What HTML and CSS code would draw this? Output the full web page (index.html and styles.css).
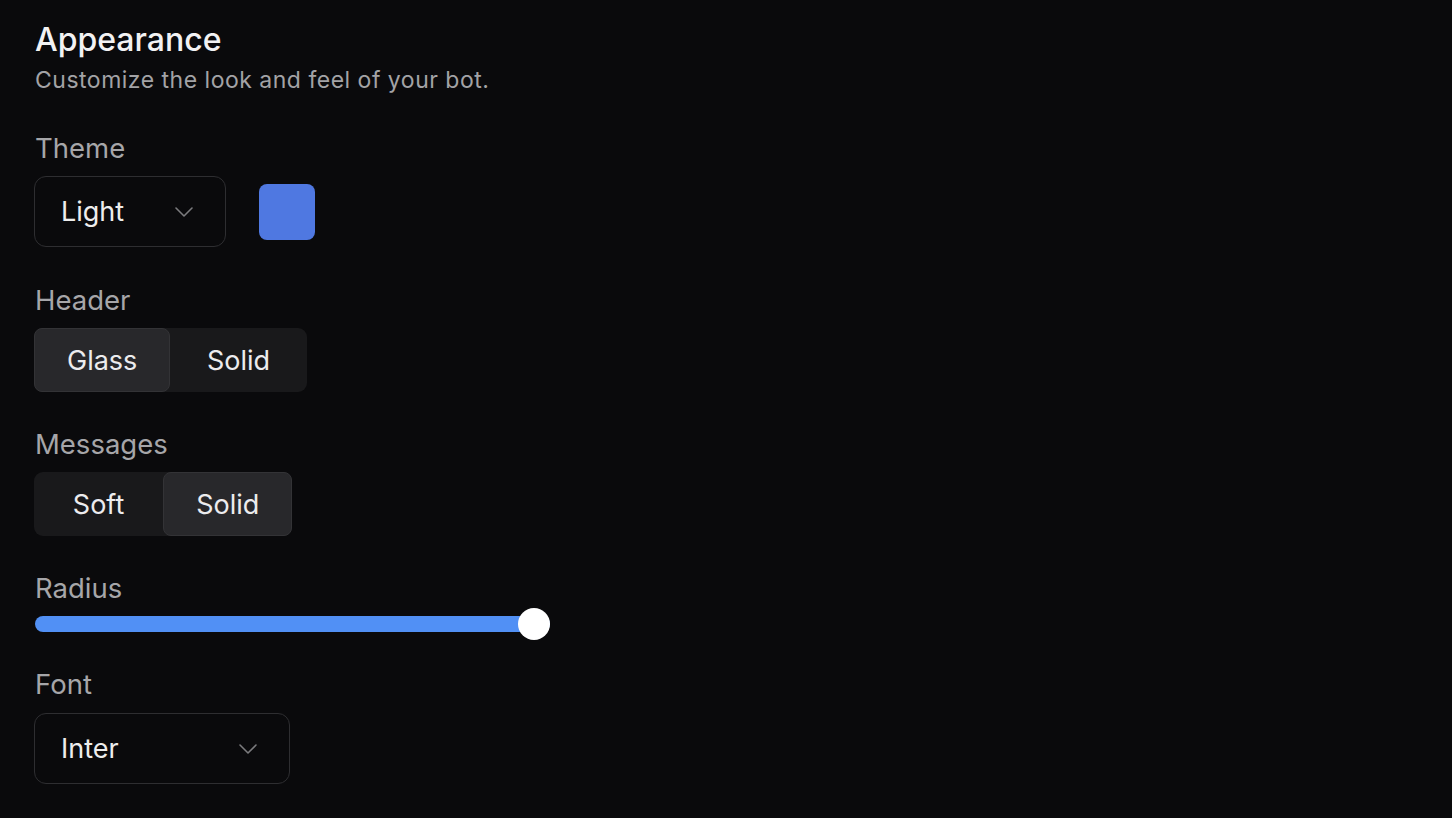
FILE: index.html
```html
<!DOCTYPE html>
<html lang="en">
<head>
<meta charset="utf-8">
<title>Appearance</title>
<link rel="stylesheet" href="styles.css">
</head>
<body>
<main class="panel">
  <header class="intro">
    <h1 class="title">Appearance</h1>
    <p class="subtitle">Customize the look and feel of your bot.</p>
  </header>

  <section class="field field-theme">
    <div class="label">Theme</div>
    <div class="row">
      <div class="select select-theme">
        <span>Light</span>
        <svg class="chev" width="18" height="10" viewBox="0 0 18 10"><path d="M1 1l8 8 8-8" fill="none" stroke="#7b7b7e" stroke-width="1.6" stroke-linecap="round" stroke-linejoin="round"/></svg>
      </div>
      <div class="swatch"></div>
    </div>
  </section>

  <section class="field">
    <div class="label">Header</div>
    <div class="seg">
      <div class="seg-btn active">Glass</div>
      <div class="seg-btn">Solid</div>
    </div>
  </section>

  <section class="field">
    <div class="label">Messages</div>
    <div class="seg">
      <div class="seg-btn">Soft</div>
      <div class="seg-btn active">Solid</div>
    </div>
  </section>

  <section class="field">
    <div class="label">Radius</div>
    <div class="slider">
      <div class="track"></div>
      <div class="thumb"></div>
    </div>
  </section>

  <section class="field field-font">
    <div class="label">Font</div>
    <div class="select select-font">
      <span>Inter</span>
      <svg class="chev" width="18" height="10" viewBox="0 0 18 10"><path d="M1 1l8 8 8-8" fill="none" stroke="#7b7b7e" stroke-width="1.6" stroke-linecap="round" stroke-linejoin="round"/></svg>
    </div>
  </section>
</main>
</body>
</html>
```
FILE: styles.css
```css
html, body {
  margin: 0;
  padding: 0;
  background: #0a0a0c;
}
body {
  font-family: Inter, "Noto Sans", sans-serif;
  color: #ededed;
}
.panel {
  padding: 20px 34px 0 34px;
  display: flex;
  flex-direction: column;
}
.intro {
  margin-bottom: 36px;
}
.title {
  margin: 0 0 0 1px;
  font-size: 32px;
  line-height: 40px;
  font-weight: 500;
  color: #f2f2f3;
}
.subtitle {
  margin: 4px 0 0 1px;
  font-size: 23px;
  line-height: 32px;
  color: #a3a3a6;
  letter-spacing: 0.5px;
}
.field {
  display: flex;
  flex-direction: column;
  align-items: flex-start;
  gap: 12px;
  margin-bottom: 36px;
}
.field-theme {
  margin-bottom: 37px;
}
.field-font {
  gap: 13px;
}
.label {
  margin-left: 1px;
  font-size: 27.5px;
  line-height: 32px;
  color: #a6a6a9;
}
.row {
  display: flex;
  align-items: center;
  gap: 33px;
}
.select {
  box-sizing: border-box;
  height: 71px;
  border: 1.5px solid #2e2e31;
  border-radius: 12px;
  display: flex;
  align-items: center;
  justify-content: space-between;
  padding: 0 32px 0 26px;
  font-size: 27px;
  color: #ededed;
}
.select-theme { width: 192px; }
.select-font { width: 256px; }
.chev { display: block; }
.swatch {
  width: 56px;
  height: 56px;
  border-radius: 8px;
  background: #4f78e1;
}
.seg {
  display: inline-grid;
  grid-auto-flow: column;
  grid-auto-columns: 1fr;
  background: #19191b;
  border-radius: 9px;
  height: 64px;
}
.seg-btn {
  box-sizing: border-box;
  display: flex;
  align-items: center;
  justify-content: center;
  padding: 0 32px;
  font-size: 27px;
  color: #ececee;
  border: 1px solid transparent;
  border-radius: 8px;
}
.seg-btn.active {
  background: #28282b;
  border-color: #333336;
}
.slider {
  position: relative;
  width: 515px;
  height: 16px;
  margin-left: 1px;
}
.track {
  height: 16px;
  border-radius: 8px;
  background: #5190f5;
}
.thumb {
  position: absolute;
  right: 0;
  top: -8px;
  width: 32px;
  height: 32px;
  border-radius: 50%;
  background: #ffffff;
}
```
